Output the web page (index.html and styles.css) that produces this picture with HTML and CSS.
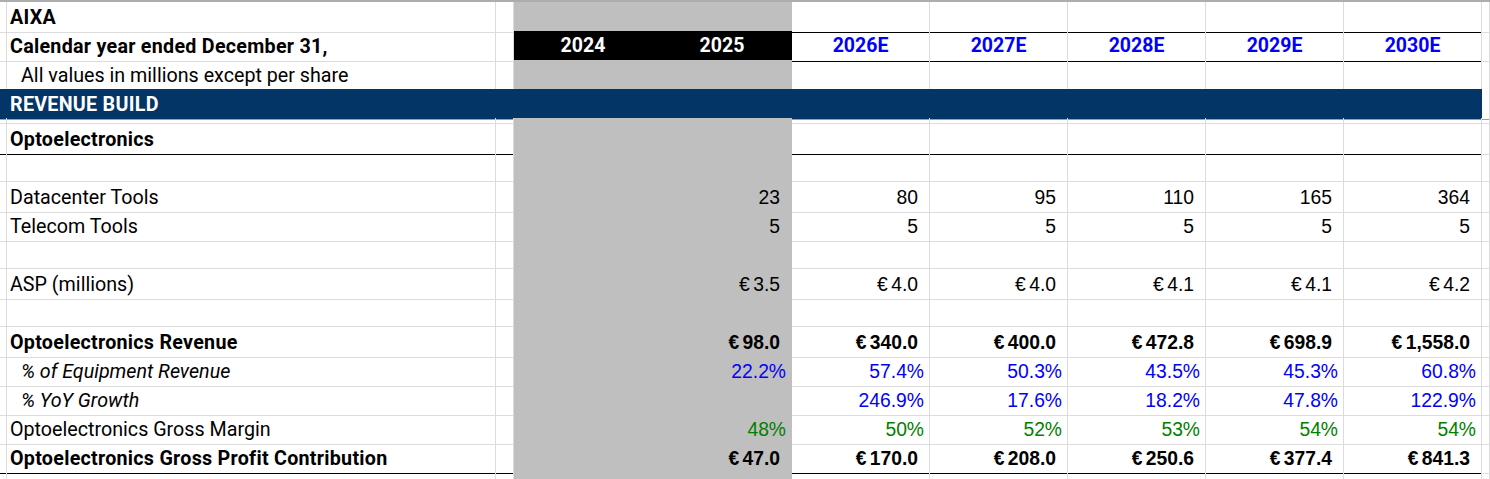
FILE: index.html
```html
<!DOCTYPE html>
<html lang="en">
<head>
<meta charset="utf-8">
<title>AIXA Revenue Build</title>
<link rel="stylesheet" href="styles.css">
</head>
<body>
<div class="sheet">
  <div class="row">
    <div class="c"></div><div class="c lbl b">AIXA</div><div class="c"></div>
    <div class="c g"></div><div class="c g"></div>
    <div class="c bb"></div><div class="c bb"></div><div class="c bb"></div><div class="c bb"></div><div class="c bb"></div><div class="c"></div>
  </div>
  <div class="row">
    <div class="c"></div><div class="c lbl b">Calendar year ended December 31,</div><div class="c"></div>
    <div class="c hk">2024</div><div class="c hk">2025</div>
    <div class="c he">2026E</div><div class="c he">2027E</div><div class="c he">2028E</div><div class="c he">2029E</div><div class="c he">2030E</div><div class="c"></div>
  </div>
  <div class="row">
    <div class="c"></div><div class="c lbl ind">All values in millions except per share</div><div class="c"></div>
    <div class="c g"></div><div class="c g"></div>
    <div class="c"></div><div class="c"></div><div class="c"></div><div class="c"></div><div class="c"></div><div class="c"></div>
  </div>
  <div class="row band">
    <div class="c"></div><div class="c lbl b">REVENUE BUILD</div><div class="c"></div>
    <div class="c"></div><div class="c"></div>
    <div class="c"></div><div class="c"></div><div class="c"></div><div class="c"></div><div class="c"></div><div class="c end"></div>
  </div>
  <div class="row thin">
    <div class="c"></div><div class="c"></div><div class="c"></div>
    <div class="c g"></div><div class="c g"></div>
    <div class="c"></div><div class="c"></div><div class="c"></div><div class="c"></div><div class="c"></div><div class="c"></div>
  </div>
  <div class="row">
    <div class="c bb"></div><div class="c lbl b bb">Optoelectronics</div><div class="c bb"></div>
    <div class="c g"></div><div class="c g"></div>
    <div class="c bb"></div><div class="c bb"></div><div class="c bb"></div><div class="c bb"></div><div class="c bb"></div><div class="c"></div>
  </div>
  <div class="row">
    <div class="c"></div><div class="c"></div><div class="c"></div>
    <div class="c g"></div><div class="c g"></div>
    <div class="c"></div><div class="c"></div><div class="c"></div><div class="c"></div><div class="c"></div><div class="c"></div>
  </div>
  <div class="row">
    <div class="c"></div><div class="c lbl">Datacenter Tools</div><div class="c"></div>
    <div class="c g"></div><div class="c g num">23</div>
    <div class="c num">80</div><div class="c num">95</div><div class="c num">110</div><div class="c num">165</div><div class="c num">364</div><div class="c"></div>
  </div>
  <div class="row">
    <div class="c"></div><div class="c lbl">Telecom Tools</div><div class="c"></div>
    <div class="c g"></div><div class="c g num">5</div>
    <div class="c num">5</div><div class="c num">5</div><div class="c num">5</div><div class="c num">5</div><div class="c num">5</div><div class="c"></div>
  </div>
  <div class="row">
    <div class="c"></div><div class="c"></div><div class="c"></div>
    <div class="c g"></div><div class="c g"></div>
    <div class="c"></div><div class="c"></div><div class="c"></div><div class="c"></div><div class="c"></div><div class="c"></div>
  </div>
  <div class="row">
    <div class="c"></div><div class="c lbl">ASP (millions)</div><div class="c"></div>
    <div class="c g"></div><div class="c g num eur">€ 3.5</div>
    <div class="c num eur">€ 4.0</div><div class="c num eur">€ 4.0</div><div class="c num eur">€ 4.1</div><div class="c num eur">€ 4.1</div><div class="c num eur">€ 4.2</div><div class="c"></div>
  </div>
  <div class="row">
    <div class="c"></div><div class="c"></div><div class="c"></div>
    <div class="c g"></div><div class="c g"></div>
    <div class="c"></div><div class="c"></div><div class="c"></div><div class="c"></div><div class="c"></div><div class="c"></div>
  </div>
  <div class="row">
    <div class="c"></div><div class="c lbl b">Optoelectronics Revenue</div><div class="c"></div>
    <div class="c g"></div><div class="c g num eur b">€ 98.0</div>
    <div class="c num eur b">€ 340.0</div><div class="c num eur b">€ 400.0</div><div class="c num eur b">€ 472.8</div><div class="c num eur b">€ 698.9</div><div class="c num eur b">€ 1,558.0</div><div class="c"></div>
  </div>
  <div class="row">
    <div class="c"></div><div class="c lbl ind i">% of Equipment Revenue</div><div class="c"></div>
    <div class="c g"></div><div class="c g num pct blue">22.2%</div>
    <div class="c num pct blue">57.4%</div><div class="c num pct blue">50.3%</div><div class="c num pct blue">43.5%</div><div class="c num pct blue">45.3%</div><div class="c num pct blue">60.8%</div><div class="c"></div>
  </div>
  <div class="row">
    <div class="c"></div><div class="c lbl ind i">% YoY Growth</div><div class="c"></div>
    <div class="c g"></div><div class="c g"></div>
    <div class="c num pct blue">246.9%</div><div class="c num pct blue">17.6%</div><div class="c num pct blue">18.2%</div><div class="c num pct blue">47.8%</div><div class="c num pct blue">122.9%</div><div class="c"></div>
  </div>
  <div class="row">
    <div class="c"></div><div class="c lbl">Optoelectronics Gross Margin</div><div class="c"></div>
    <div class="c g"></div><div class="c g num pct green">48%</div>
    <div class="c num pct green">50%</div><div class="c num pct green">52%</div><div class="c num pct green">53%</div><div class="c num pct green">54%</div><div class="c num pct green">54%</div><div class="c"></div>
  </div>
  <div class="row">
    <div class="c bb"></div><div class="c lbl b bb">Optoelectronics Gross Profit Contribution</div><div class="c bb"></div>
    <div class="c g"></div><div class="c g num eur b">€ 47.0</div>
    <div class="c num eur b bb">€ 170.0</div><div class="c num eur b bb">€ 208.0</div><div class="c num eur b bb">€ 250.6</div><div class="c num eur b bb">€ 377.4</div><div class="c num eur b bb">€ 841.3</div><div class="c"></div>
  </div>
  <div class="row">
    <div class="c"></div><div class="c"></div><div class="c"></div>
    <div class="c g"></div><div class="c g"></div>
    <div class="c"></div><div class="c"></div><div class="c"></div><div class="c"></div><div class="c"></div><div class="c"></div>
  </div>
</div>
</body>
</html>
```

FILE: styles.css
```css
html, body {
  margin: 0;
  padding: 0;
  background: #ffffff;
}

.sheet {
  width: 1490px;
  height: 479px;
  overflow: hidden;
  border-top: 2px solid #adadad;
  box-sizing: border-box;
}

.row {
  display: grid;
  grid-template-columns: 7px 489px 18px 139px 139px repeat(5, 138px) 1fr;
  height: 29px;
}

.row.thin {
  height: 6px;
}

.c {
  box-sizing: border-box;
  border-right: 1px solid #dcdcdc;
  border-bottom: 1px solid #dcdcdc;
  white-space: nowrap;
  line-height: 28px;
  padding-top: 2px;
  color: #000;
}

.g {
  background: #bfbfbf;
  border-color: #bfbfbf;
}

.bb {
  border-bottom-color: #000;
}

.lbl {
  font-family: Roboto, "Liberation Sans", sans-serif;
  font-size: 19.7px;
  padding-left: 3px;
}

.lbl.b {
  letter-spacing: 0.27px;
}

.ind {
  padding-left: 14px;
}

.b {
  font-weight: bold;
}

.i {
  font-style: italic;
}

.num {
  font-family: "Liberation Sans", Arial, sans-serif;
  font-size: 19.3px;
  text-align: right;
  padding-right: 11px;
}

.eur {
  word-spacing: -2px;
}

.pct {
  padding-right: 5px;
}

.blue {
  color: #0000ff;
}

.green {
  color: #008000;
}

.hk {
  background: #000;
  border-color: #000;
  color: #fff;
  font-family: Roboto, "Liberation Sans", sans-serif;
  font-weight: bold;
  font-size: 19.5px;
  text-align: center;
  padding-top: 1px;
}

.he {
  color: #0000ff;
  border-bottom-color: #000;
  font-family: Roboto, "Liberation Sans", sans-serif;
  font-weight: bold;
  font-size: 19.5px;
  text-align: center;
  padding-top: 1px;
}

.band .c {
  background: #033566;
  border-right-color: #033566;
  border-bottom-color: #a0a0a0;
  color: #fff;
}

.band .c.end {
  background: #fff;
  border-right-color: #dcdcdc;
}
```
